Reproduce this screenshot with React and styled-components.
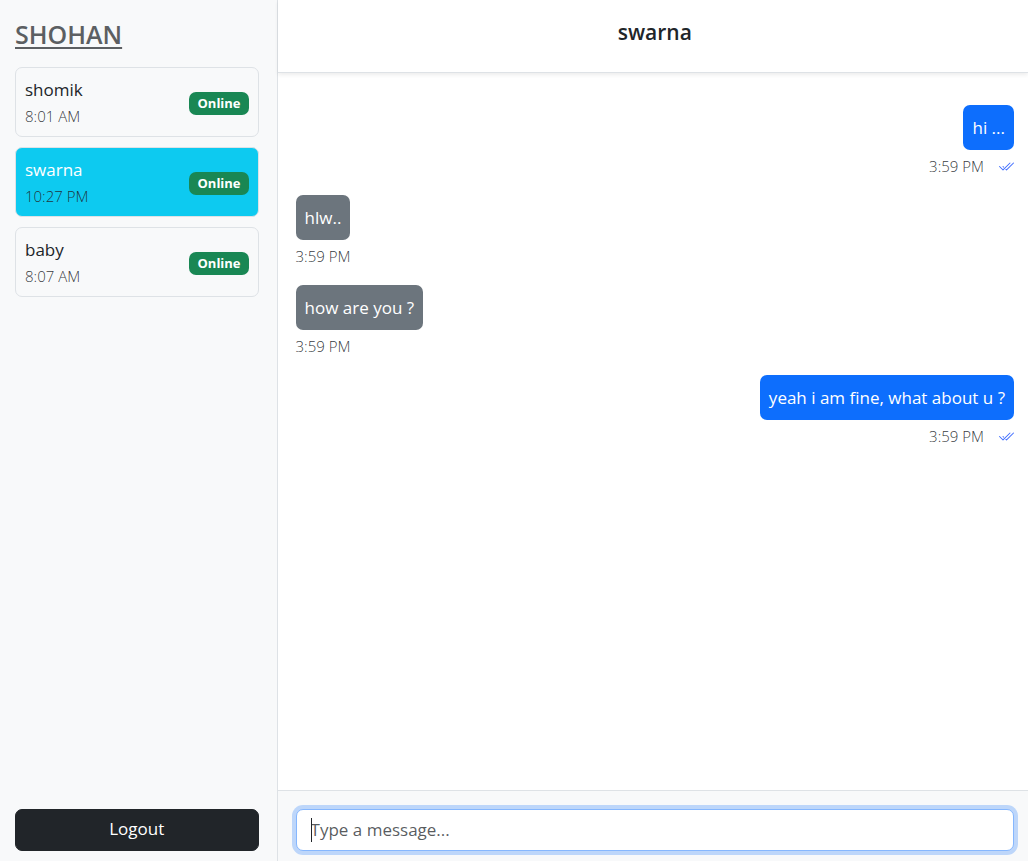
import React from "react";
import styled, { createGlobalStyle } from "styled-components";
import { BsCheck2All } from "react-icons/bs";

const GlobalStyle = createGlobalStyle`
  *, *::before, *::after { box-sizing: border-box; }
  body {
    margin: 0;
    background: #fff;
    color: #212529;
    font-family: "Segoe UI", "Open Sans", "Noto Sans", sans-serif;
    font-size: 17px;
    line-height: 27px;
  }
  h1, h2, p, ul { margin: 0; padding: 0; }
  ul { list-style: none; }
`;

const Page = styled.div`
  display: flex;
  min-height: 100vh;
`;

const Sidebar = styled.aside`
  display: flex;
  flex-direction: column;
  flex: 0 0 27%;
  min-width: 0;
  padding: 17px 18px 10px 15px;
  background: #f8f9fa;
  border-right: 1px solid #dee2e6;
`;

const UserName = styled.h1`
  margin-bottom: 16px;
  color: #5c5f62;
  font-size: 25px;
  font-weight: 600;
  line-height: 34px;
  text-transform: uppercase;
  text-decoration: underline;
  text-decoration-thickness: 2px;
  text-underline-offset: 3px;
`;

const ContactList = styled.ul`
  display: flex;
  flex-direction: column;
  flex: 1;
  gap: 10px;
`;

const Contact = styled.button`
  display: flex;
  align-items: center;
  justify-content: space-between;
  width: 100%;
  padding: 9px 9px 7px;
  border: 1px solid #dee2e6;
  border-radius: 7px;
  background: ${(p) => (p.$active ? "#0dcaf0" : "transparent")};
  color: ${(p) => (p.$active ? "#fff" : "#212529")};
  font: inherit;
  line-height: 26px;
  text-align: left;
  cursor: pointer;
`;

const ContactName = styled.span`
  display: block;
`;

const Time = styled.small`
  display: block;
  color: rgba(33, 37, 41, 0.9);
  font-size: 15px;
  font-weight: 300;
`;

const Badge = styled.span`
  padding: 0 8px;
  border-radius: 7px;
  background: #198754;
  color: #fff;
  font-size: 13px;
  font-weight: 700;
  line-height: 23px;
`;

const LogoutButton = styled.button`
  height: 42px;
  padding: 6px 14px 8px;
  border: 1px solid #212529;
  border-radius: 7px;
  background: #212529;
  color: #fff;
  font: inherit;
  line-height: 26px;
  cursor: pointer;
`;

const Chat = styled.main`
  display: flex;
  flex-direction: column;
  flex: 1;
  min-width: 0;
`;

const ChatHeader = styled.header`
  padding: 19px 14px 26px 18px;
  border-bottom: 1px solid #dee2e6;
  box-shadow: 0 2px 4px rgba(0, 0, 0, 0.075);
  text-align: center;
`;

const ChatTitle = styled.h2`
  font-size: 21px;
  font-weight: 600;
  line-height: 27px;
`;

const Messages = styled.section`
  display: flex;
  flex-direction: column;
  flex: 1;
  gap: 15px;
  padding: 32px 14px 32px 18px;
`;

const Message = styled.article`
  display: flex;
  flex-direction: column;
  align-items: ${(p) => (p.$mine ? "flex-end" : "flex-start")};
  gap: 3px;
`;

const Bubble = styled.p`
  padding: 9px;
  border-radius: 7px;
  background: ${(p) => (p.$mine ? "#0d6efd" : "#6c757d")};
  color: #fff;
`;

const Meta = styled.div`
  display: flex;
  align-items: center;
  gap: 14px;
`;

const ReadMark = styled(BsCheck2All)`
  width: 16px;
  height: 16px;
  color: #3d6bff;
`;

const Composer = styled.form`
  padding: 18px 14px 10px 18px;
  border-top: 1px solid #dee2e6;
  background: #f8f9fa;
`;

/* Shows a tall insertion bar while the focused field is still empty. */
const InputFrame = styled.div`
  position: relative;

  &:has(input:focus:placeholder-shown)::after {
    content: "";
    position: absolute;
    top: 9px;
    bottom: 9px;
    left: 15px;
    width: 1px;
    background: #212529;
    pointer-events: none;
  }
`;

const MessageInput = styled.input`
  display: block;
  width: 100%;
  height: 42px;
  padding: 6px 14px 8px;
  border: 1px solid #86b7fe;
  border-radius: 7px;
  outline: none;
  box-shadow: 0 0 0 4px rgba(13, 110, 253, 0.25);
  background: #fff;
  color: #212529;
  font: inherit;
  line-height: 26px;

  &:placeholder-shown {
    caret-color: transparent;
  }

  &::placeholder {
    color: rgba(33, 37, 41, 0.75);
    opacity: 1;
  }
`;

const contacts = [
  { name: "shomik", time: "8:01 AM" },
  { name: "swarna", time: "10:27 PM", active: true },
  { name: "baby", time: "8:07 AM" },
];

const messages = [
  { text: "hi ...", time: "3:59 PM", mine: true },
  { text: "hlw..", time: "3:59 PM" },
  { text: "how are you ?", time: "3:59 PM" },
  { text: "yeah i am fine, what about u ?", time: "3:59 PM", mine: true },
];

export default function App() {
  return (
    <>
      <GlobalStyle />
      <Page>
        <Sidebar>
          <UserName>Shohan</UserName>
          <ContactList>
            {contacts.map((c) => (
              <li key={c.name}>
                <Contact type="button" $active={c.active}>
                  <span>
                    <ContactName>{c.name}</ContactName>
                    <Time>{c.time}</Time>
                  </span>
                  <Badge>Online</Badge>
                </Contact>
              </li>
            ))}
          </ContactList>
          <LogoutButton type="button">Logout</LogoutButton>
        </Sidebar>
        <Chat>
          <ChatHeader>
            <ChatTitle>swarna</ChatTitle>
          </ChatHeader>
          <Messages>
            {messages.map((m, i) => (
              <Message key={i} $mine={m.mine}>
                <Bubble $mine={m.mine}>{m.text}</Bubble>
                <Meta>
                  <Time>{m.time}</Time>
                  {m.mine && <ReadMark aria-label="Read" />}
                </Meta>
              </Message>
            ))}
          </Messages>
          <Composer onSubmit={(e) => e.preventDefault()}>
            <InputFrame>
              <MessageInput
                type="text"
                aria-label="Message"
                placeholder="Type a message..."
                autoFocus
              />
            </InputFrame>
          </Composer>
        </Chat>
      </Page>
    </>
  );
}
